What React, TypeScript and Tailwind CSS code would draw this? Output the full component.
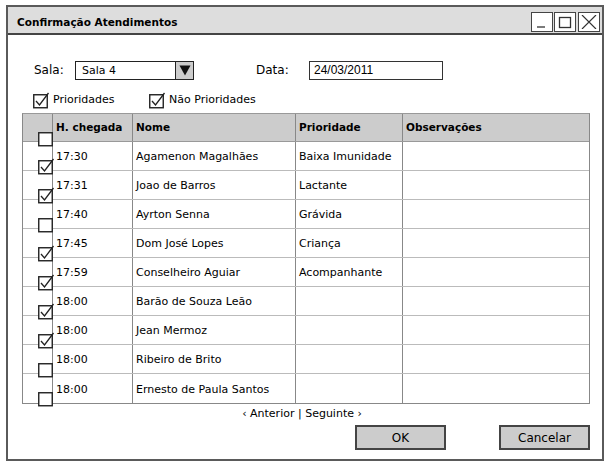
const rows = [
  { checked: true, time: "17:30", name: "Agamenon Magalhães", prio: "Baixa Imunidade" },
  { checked: true, time: "17:31", name: "Joao de Barros", prio: "Lactante" },
  { checked: false, time: "17:40", name: "Ayrton Senna", prio: "Grávida" },
  { checked: true, time: "17:45", name: "Dom José Lopes", prio: "Criança" },
  { checked: true, time: "17:59", name: "Conselheiro Aguiar", prio: "Acompanhante" },
  { checked: true, time: "18:00", name: "Barão de Souza Leão", prio: "" },
  { checked: true, time: "18:00", name: "Jean Mermoz", prio: "" },
  { checked: false, time: "18:00", name: "Ribeiro de Brito", prio: "" },
  { checked: false, time: "18:00", name: "Ernesto de Paula Santos", prio: "" },
];

function CheckBox({ checked }: { checked: boolean }) {
  // sketchy checkbox: the tick pokes out of the box top-right
  return (
    <svg width="17" height="17" viewBox="0 0 17 17" className="block">
      <rect x="0.75" y="2.75" width="13.5" height="13" fill="white" stroke="#222" strokeWidth="1.4" />
      {checked && (
        <path d="M3 9 L6.5 13 L15.5 1" fill="none" stroke="#222" strokeWidth="1.3" />
      )}
    </svg>
  );
}

function TitleButton({ kind }: { kind: "min" | "max" | "close" }) {
  return (
    <div className="w-[22px] h-[20px] border border-[#444] bg-white flex items-center justify-center">
      <svg width="16" height="14" viewBox="0 0 16 14">
        {kind === "min" && <path d="M3 12 H11" stroke="#333" strokeWidth="1.3" />}
        {kind === "max" && <rect x="2.5" y="2.5" width="11" height="10" fill="none" stroke="#333" strokeWidth="1.3" />}
        {kind === "close" && <path d="M1 0 L15 14 M15 0 L1 14" stroke="#333" strokeWidth="1.2" />}
      </svg>
    </div>
  );
}

const cols = "grid grid-cols-[30px_80px_163px_107px_1fr]";

export default function App() {
  return (
    <div className="w-[608px] h-[467px] bg-white pt-[5px] pl-[6px] text-[11px] text-black font-['DejaVu_Sans',sans-serif]">
      <div className="w-[598px] h-[456px] border-2 border-[#5a5a5a] flex flex-col">
        {/* title bar */}
        <div className="h-[28px] bg-[#dddddd] border-b-2 border-[#444] flex items-center pl-[9px] pr-[2px]">
          <span className="font-bold text-[10.5px] flex-1 pt-[5px]">Confirmação Atendimentos</span>
          <div className="flex gap-[1px] mt-[4px] items-start self-start pt-[1px]">
            <TitleButton kind="min" />
            <TitleButton kind="max" />
            <div className="ml-[1px]">
              <TitleButton kind="close" />
            </div>
          </div>
        </div>

        <div className="pl-[26px] pt-[25px] flex items-center h-[45px]">
          <span className="w-[41px] text-[12px]">Sala:</span>
          <div className="w-[119px] h-[19px] border border-[#222] flex items-stretch">
            <span className="flex-1 pl-[6px] leading-[17px]">Sala 4</span>
            <div className="w-[18px] bg-[#cccccc] border-l border-[#222] flex items-center justify-center">
              <svg width="12" height="11" viewBox="0 0 12 11">
                <path d="M0.5 0.5 H11.5 L6 10.5 Z" fill="#111" />
              </svg>
            </div>
          </div>
          <span className="ml-[62px] w-[53px] text-[12px]">Data:</span>
          <div className="w-[134px] h-[19px] border border-[#333] pl-[4px] leading-[17px] font-['Liberation_Sans',sans-serif] text-[12px]">
            24/03/2011
          </div>
        </div>

        <div className="pl-[25px] mt-[12px] flex items-center h-[16px]">
          <CheckBox checked />
          <span className="ml-[3px] w-[96px]">Prioridades</span>
          <CheckBox checked />
          <span className="ml-[3px]">Não Prioridades</span>
        </div>

        <div className="ml-[14px] mt-[5px] w-[568px] border border-[#888] border-t-[#999]">
          <div className={`${cols} h-[28px] bg-[#cccccc] font-bold text-[10.5px] border-b border-[#999]`}>
            <div className="relative border-r border-[#888]">
              <div className="absolute left-[15px] top-[16px] z-10">
                <CheckBox checked={false} />
              </div>
            </div>
            <div className="border-r border-[#888] pl-[3px] flex items-center">H. chegada</div>
            <div className="border-r border-[#888] pl-[3px] flex items-center">Nome</div>
            <div className="border-r border-[#888] pl-[3px] flex items-center">Prioridade</div>
            <div className="pl-[3px] flex items-center">Observações</div>
          </div>
          {rows.map((r, i) => (
            <div
              key={i}
              className={`${cols} h-[29px] ${i < rows.length - 1 ? "border-b border-[#bbb]" : ""}`}
            >
              <div className="relative border-r border-[#888]">
                <div className="absolute left-[15px] top-[16px] z-10">
                  <CheckBox checked={r.checked} />
                </div>
              </div>
              <div className="border-r border-[#888] pl-[3px] flex items-center pt-[3px]">{r.time}</div>
              <div className="border-r border-[#888] pl-[3px] flex items-center pt-[3px]">{r.name}</div>
              <div className="border-r border-[#888] pl-[3px] flex items-center pt-[3px]">{r.prio}</div>
              <div />
            </div>
          ))}
        </div>

        <div className="ml-[14px] w-[568px] h-[18px] flex justify-center items-center pr-[8px] mt-[1px]">
          ‹ Anterior | Seguinte ›
        </div>

        <div className="flex mt-[2px] pl-[347px] gap-[53px]">
          <button className="w-[91px] h-[25px] bg-[#cccccc] border-2 border-[#444] text-[12px]">OK</button>
          <button className="w-[91px] h-[25px] bg-[#cccccc] border-2 border-[#444] text-[12px]">Cancelar</button>
        </div>
      </div>
    </div>
  );
}
